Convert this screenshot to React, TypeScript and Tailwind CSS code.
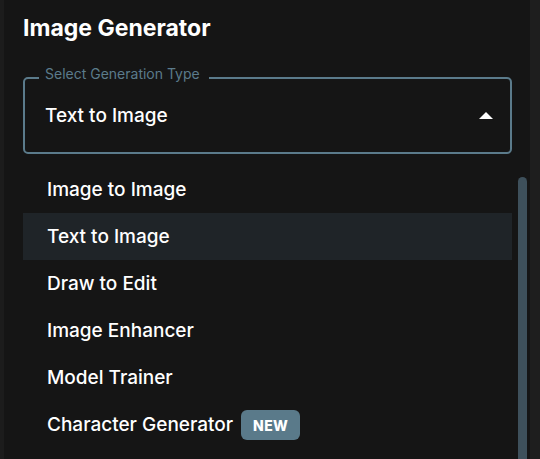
import { useState } from "react";

const TYPES = [
  "Image to Image",
  "Text to Image",
  "Draw to Edit",
  "Image Enhancer",
  "Model Trainer",
  "Character Generator",
];

function App() {
  const [selected, setSelected] = useState("Text to Image");

  return (
    <div
      className="flex h-[459px] w-[540px] overflow-hidden bg-[#1c1c1c] text-white"
      style={{ fontFamily: "Inter, 'Liberation Sans', sans-serif" }}
    >
      <div className="ml-[4px] flex w-[526px] flex-col bg-[#151515] pl-[19px] pr-[18px]">
        <h1 className="mt-[14px] text-[23px] leading-[28px] font-bold">Image Generator</h1>

        <div className="relative mt-[35px] flex h-[77px] items-center justify-between rounded-[5px] border-2 border-[#5b7b8b] pl-[20px] pr-[17px]">
          <span className="absolute -top-[14px] left-[14px] bg-[#151515] pr-[9px] pl-[6px] text-[14px] leading-[18px] text-[#5b7b8b]">
            Select Generation Type
          </span>
          <span className="mt-[2px] text-[19px] font-medium">{selected}</span>
          <svg width="14" height="7" viewBox="0 0 14 7" className="mb-[1px]">
            <path d="M0 7 L7 0 L14 7 Z" fill="#ffffff" />
          </svg>
        </div>

        <div className="relative mt-[12px] flex-1">
          <ul>
            {TYPES.map((t) => (
              <li
                key={t}
                onClick={() => setSelected(t)}
                className={
                  "flex h-[47px] cursor-pointer items-center gap-[8px] pt-[1px] pl-[24px] text-[19px] font-medium " +
                  (t === selected ? "bg-[#1f2428]" : "")
                }
              >
                <span>{t}</span>
                {t === "Character Generator" && (
                  <span className="flex h-[30px] w-[59px] items-center justify-center rounded-[6px] bg-[#5a7a8a] text-[14px] font-extrabold tracking-wide">
                    NEW
                  </span>
                )}
              </li>
            ))}
          </ul>
          <div className="absolute top-[11px] right-[-15px] h-[300px] w-[9px] rounded-t-full bg-[#3e505b]" />
        </div>
      </div>
      <div className="flex-1 bg-[#1e1e1e]" />
    </div>
  );
}

export default App;
